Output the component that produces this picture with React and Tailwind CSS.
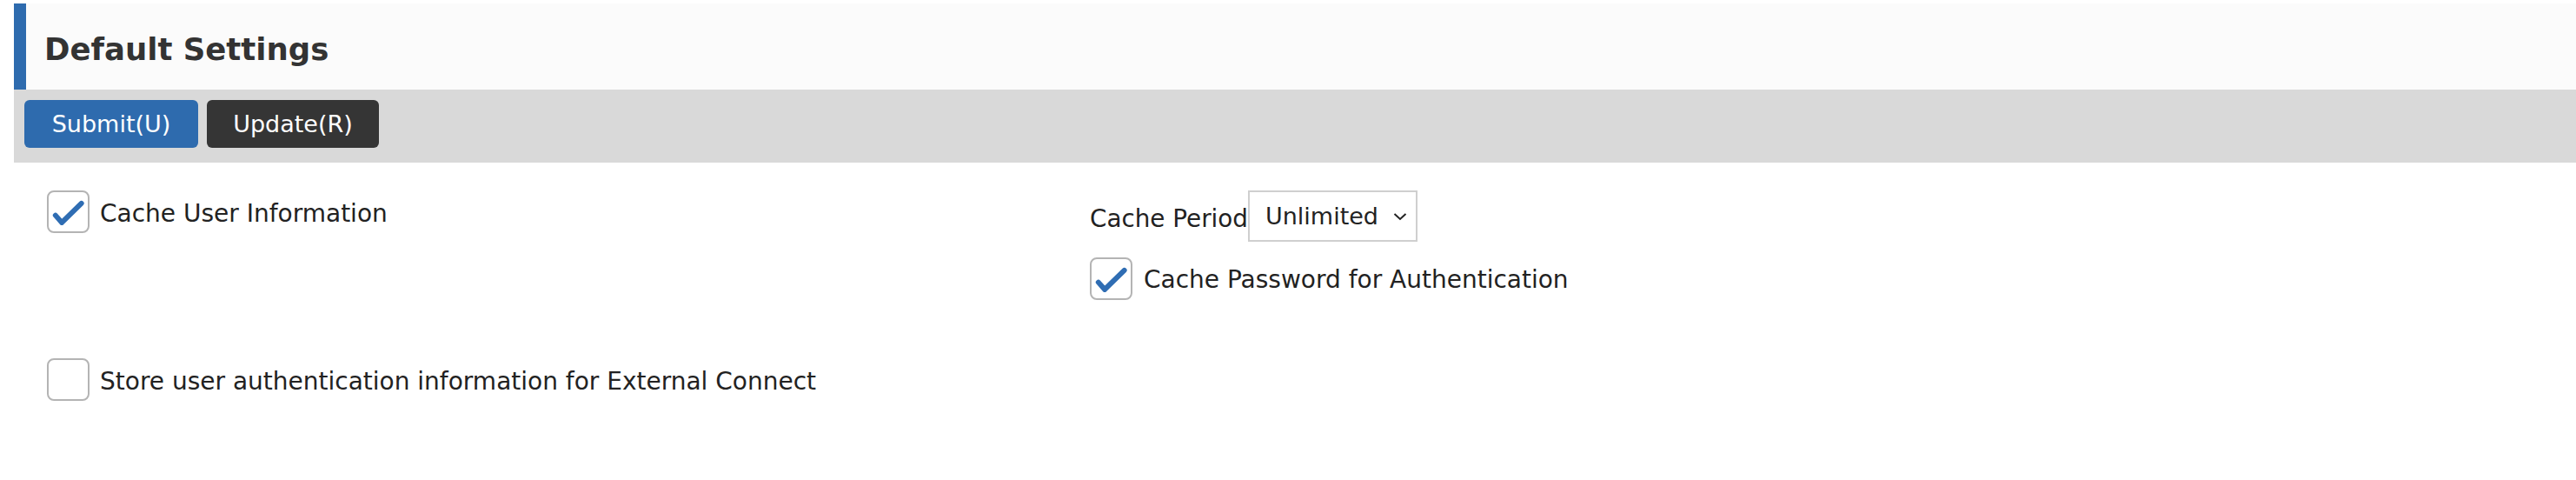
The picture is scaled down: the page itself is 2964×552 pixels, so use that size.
import React from "react";

function Check({ checked }) {
  return (
    <div className="w-[49px] h-[49px] shrink-0 rounded-[8px] border-2 border-[#b4b4b4] bg-white flex items-center justify-center">
      {checked && (
        <svg width="49" height="49" viewBox="0 0 49 49">
          <path d="M8.5 29 L16.5 38 L41 14" fill="none" stroke="#2f6db3" strokeWidth="6.5" strokeLinecap="round" strokeLinejoin="round" />
        </svg>
      )}
    </div>
  );
}

export default function App() {
  return (
    <div className="w-full h-[552px] bg-white text-[#222] font-['DejaVu_Sans',sans-serif]">
      <div className="pt-[4px] pl-[16px]">
        <div className="h-[99px] bg-[#fbfbfb] border-l-[14px] border-[#2e6bae] flex items-center pl-[21px]">
          <h1 className="text-[35.5px] font-bold text-[#333] leading-none mt-[6px]">Default Settings</h1>
        </div>
        <div className="h-[84px] bg-[#d9d9d9] flex items-start gap-[10px] pl-[12px] pt-[12px]">
          <button className="w-[200px] h-[55px] rounded-[6px] bg-[#2e6bae] text-white text-[27px] leading-none">Submit(U)</button>
          <button className="w-[198px] h-[55px] rounded-[6px] bg-[#353535] text-white text-[27px] leading-none">Update(R)</button>
        </div>
      </div>
      <div className="pl-[54px] pt-[32px]">
        <div className="grid grid-cols-[1200px_1fr]">
          <div className="flex items-center gap-[12px] self-start h-[49px]">
            <Check checked />
            <span className="text-[28px] leading-none mt-[4px]">Cache User Information</span>
          </div>
          <div className="flex flex-col gap-[18px]">
            <div className="flex items-center h-[59px]">
              <span className="text-[27.8px] leading-none mt-[6px]">Cache Period</span>
              <div className="w-[195px] h-[59px] border-2 border-[#cfcfcf] bg-white flex items-center justify-between pl-[18px] pr-[9px]">
                <span className="text-[27px] leading-none">Unlimited</span>
                <svg width="18" height="12" viewBox="0 0 18 12">
                  <path d="M2.5 3 L9 9 L15.5 3" fill="none" stroke="#222" strokeWidth="2" />
                </svg>
              </div>
            </div>
            <div className="flex items-center gap-[13px] h-[48px]">
              <Check checked />
              <span className="text-[28px] leading-none mt-[4px]">Cache Password for Authentication</span>
            </div>
          </div>
        </div>
        <div className="flex items-center gap-[12px] mt-[67px] h-[51px]">
          <Check />
          <span className="text-[28px] leading-none mt-[4px]">Store user authentication information for External Connect</span>
        </div>
      </div>
    </div>
  );
}
